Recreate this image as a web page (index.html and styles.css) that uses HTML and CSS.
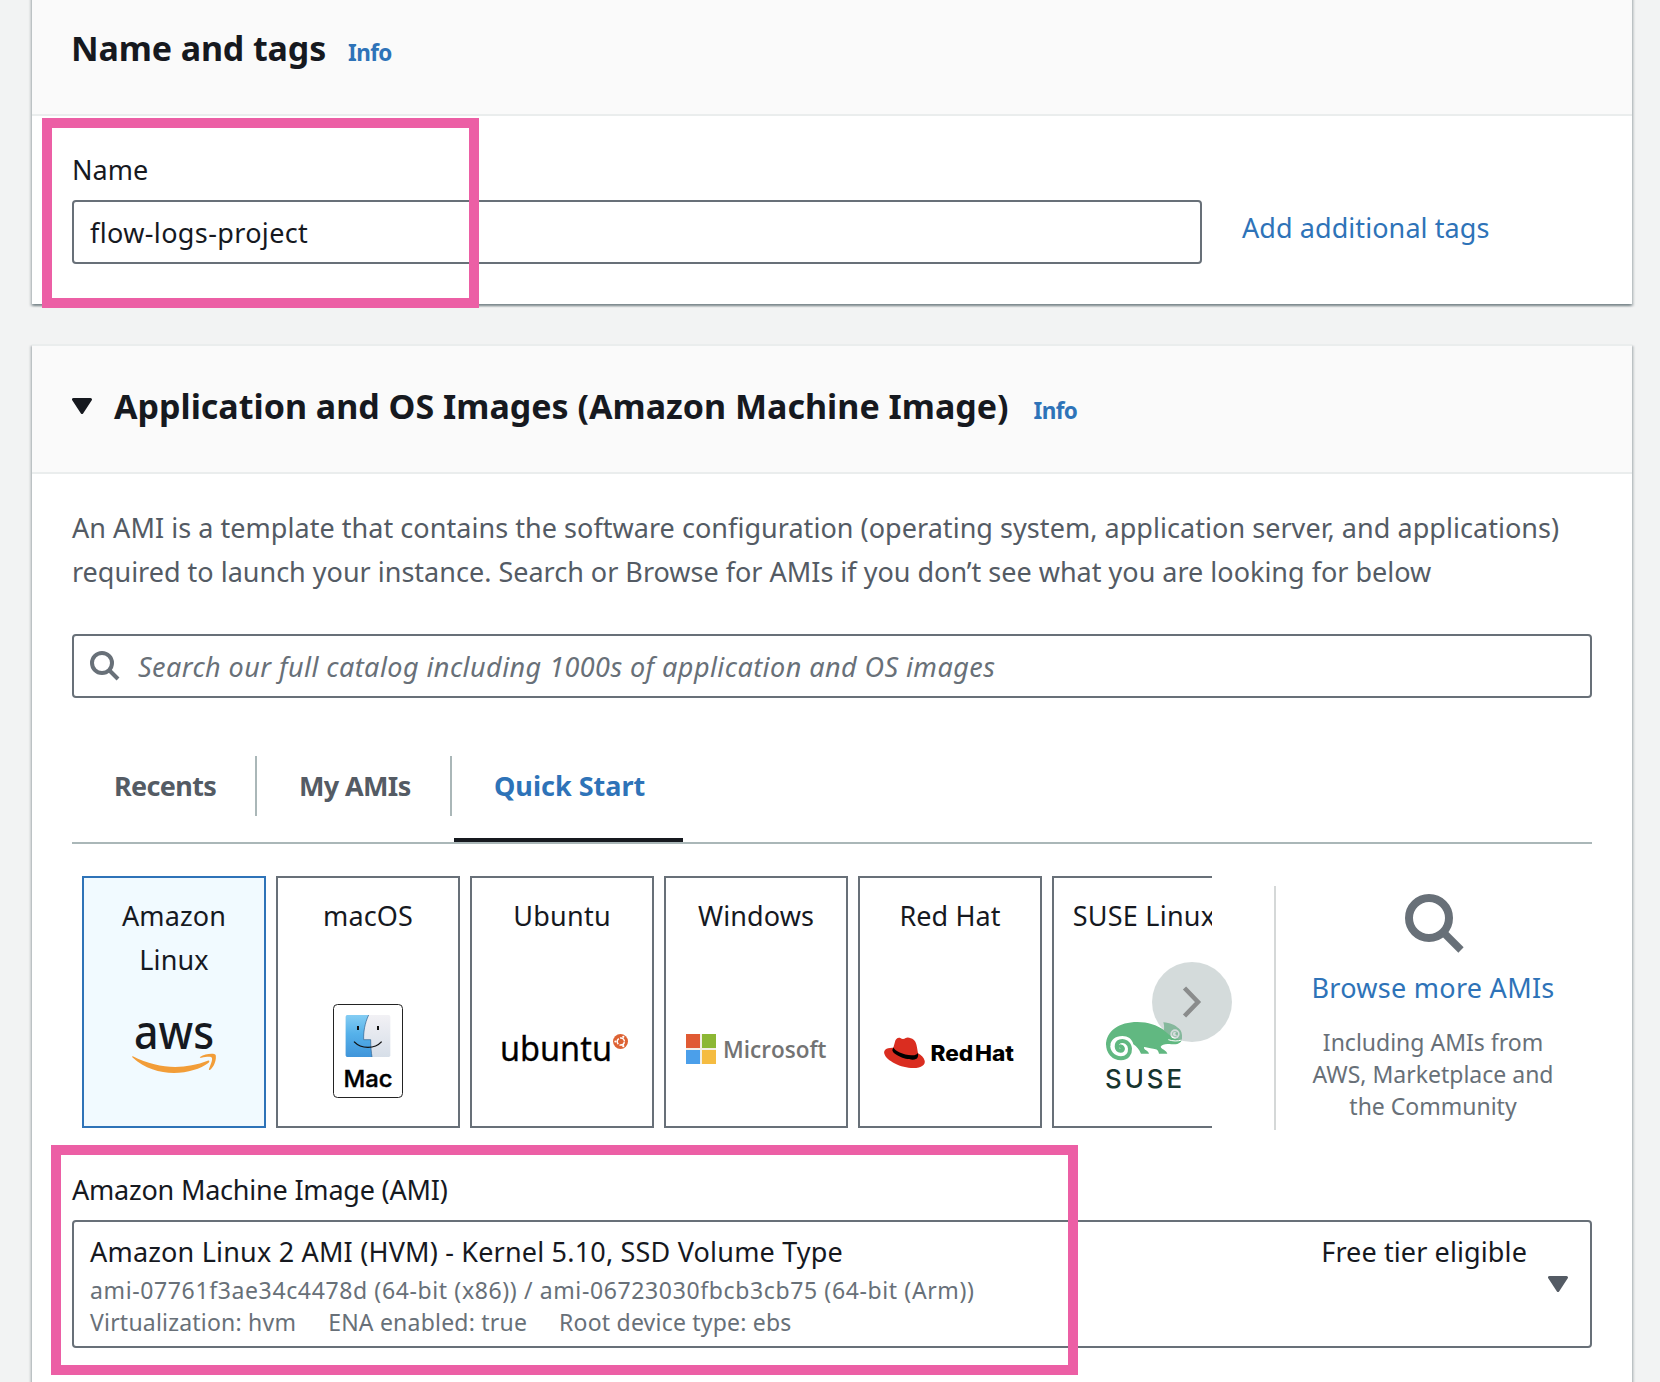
FILE: index.html
```html
<!DOCTYPE html>
<html lang="en">
<head>
<meta charset="utf-8">
<title>Launch an instance</title>
<link rel="stylesheet" href="styles.css">
</head>
<body>
<main class="page">
  <section class="panel">
    <header class="panel-header">
      <h2 class="title title-name">Name and tags</h2>
      <a class="info">Info</a>
    </header>
    <div class="panel-body">
      <label class="field-label">Name</label>
      <div class="name-row">
        <div class="input name-input">flow-logs-project</div>
        <a class="link add-tags">Add additional tags</a>
      </div>
    </div>
  </section>

  <section class="panel panel-ami">
    <header class="panel-header">
      <svg class="caret" width="20" height="16" viewBox="0 0 20 16"><path d="M1.5 1.5h17L10 14.5z" fill="#16191f" stroke="#16191f" stroke-width="3" stroke-linejoin="round"/></svg>
      <h2 class="title">Application and OS Images (Amazon Machine Image)</h2>
      <a class="info info-ami">Info</a>
    </header>
    <div class="panel-body">
      <p class="description"><span class="line-wide">An AMI is a template that contains the software configuration (operating system, application server, and applications)</span><br>required to launch your instance. Search or Browse for AMIs if you don’t see what you are looking for below</p>
      <div class="input search">
        <svg class="search-icon" width="30" height="30" viewBox="0 0 30 30" fill="none" stroke="#687078" stroke-width="4"><circle cx="12" cy="12" r="10"/><path d="M19 19l9 9"/></svg>
        <span class="placeholder">Search our full catalog including 1000s of application and OS images</span>
      </div>

      <nav class="tabs">
        <a class="tab">Recents</a>
        <a class="tab">My AMIs</a>
        <a class="tab active">Quick Start</a>
      </nav>

      <div class="quick-start">
        <div class="carousel-wrap">
          <div class="carousel">
            <div class="card selected">
              <div class="card-title">Amazon<br>Linux</div>
              <svg class="logo" viewBox="84 982 180 144">
                <text x="134" y="1048.500" class="logo-aws" textLength="80" lengthAdjust="spacingAndGlyphs">aws</text>
                <g transform="translate(60 740) scale(.33333)" fill="#f29d38">
                  <path d="M217 948C300 990 375 988 443 962C450 960 449 966 445 969C400 1003 290 1020 217 952z"/>
                  <path d="M420 951C436 940 464 939 467 945C470 958 463 980 450 990C446 991 446 988 448 984C459 958 457 954 454 952C449 949 437 951 424 953C420 954 419 952 420 951z"/>
                </g>
              </svg>
            </div>
            <div class="card">
              <div class="card-title">macOS</div>
              <svg class="logo" viewBox="278 982 180 144">
                <defs>
                  <linearGradient id="face-l" x1="0" y1="0" x2="0" y2="1"><stop offset="0" stop-color="#84cdf3"/><stop offset=".45" stop-color="#55b1ea"/><stop offset="1" stop-color="#4095da"/></linearGradient>
                  <linearGradient id="face-r" x1="0" y1="0" x2="0" y2="1"><stop offset="0" stop-color="#f2f1f5"/><stop offset="1" stop-color="#d6dee8"/></linearGradient>
                </defs>
                <rect x="333.5" y="1004.5" width="69" height="93" rx="4" fill="#fff" stroke="#232323"/>
                <g transform="translate(60 740) scale(.33333)">
                  <rect x="857" y="825" width="134" height="126" rx="5" fill="url(#face-r)"/>
                  <path d="M862 825H926C914 850 910 878 911 899H932C932 920 934 938 936 951H862Q857 951 857 946V830Q857 825 862 825z" fill="url(#face-l)"/>
                  <path d="M926 825C914 850 910 878 911 899H932C932 920 934 938 936 951" fill="none" stroke="#2d5f8c" stroke-width="2"/>
                  <path d="M894 858v12M954 858v12" stroke="#111" stroke-width="6"/>
                  <path d="M882 905C904 928 944 928 965 905" fill="none" stroke="#111" stroke-width="4"/>
                </g>
                <text x="343.500" y="1086.500" class="logo-mac" textLength="49" lengthAdjust="spacingAndGlyphs">Mac</text>
              </svg>
            </div>
            <div class="card">
              <div class="card-title wide">Ubuntu</div>
              <svg class="logo" viewBox="472 982 180 144">
                <text x="500" y="1061" class="logo-ubuntu" textLength="112" lengthAdjust="spacingAndGlyphs">ubuntu</text>
                <circle cx="620.5" cy="1041.5" r="7.5" fill="#dd6233"/>
                <circle cx="620.8" cy="1041.5" r="3.6" fill="none" stroke="#fff" stroke-width="1.5" stroke-dasharray="6.3 1.24" stroke-dashoffset="-.6"/>
                <g fill="#fff"><circle cx="615.4" cy="1041.5" r="1.1"/><circle cx="623.3" cy="1036.8" r="1.1"/><circle cx="623.3" cy="1046.2" r="1.1"/></g>
              </svg>
            </div>
            <div class="card">
              <div class="card-title">Windows</div>
              <svg class="logo" viewBox="666 982 180 144">
                <path fill="#f3efe6" d="M686 1034h30v30h-30z"/>
                <path fill="#e05a33" d="M686 1034h14v14h-14z"/><path fill="#8cb734" d="M702 1034h14v14h-14z"/>
                <path fill="#4b9fea" d="M686 1050h14v14h-14z"/><path fill="#f5bc41" d="M702 1050h14v14h-14z"/>
                <text x="723" y="1057.5" class="logo-ms" textLength="103.500" lengthAdjust="spacingAndGlyphs">Microsoft</text>
              </svg>
            </div>
            <div class="card">
              <div class="card-title">Red Hat</div>
              <svg class="logo" viewBox="860 982 180 144">
                <g transform="translate(850 860) scale(.33333)">
                  <path fill="#da2d20" d="M130 563C108 562 100 571 103 581C109 602 153 624 190 624C215 624 227 613 224 602C222 593 214 585 204 580C201 560 199 545 191 539C184 534 173 530 167 534C162 538 156 538 151 534C144 531 136 537 135 545z"/>
                  <path fill="#000" d="M130 562C133 572 160 586 185 586C198 586 203 581 204 578C205 588 205 599 188 599C162 599 127 582 127 570z"/>
                </g>
                <text x="930.500" y="1060.500" class="logo-redhat" textLength="83.500" lengthAdjust="spacingAndGlyphs">Red Hat</text>
              </svg>
            </div>
            <div class="card">
              <div class="card-title wide">SUSE Linux</div>
              <svg class="logo" viewBox="1054 982 180 144">
                <g transform="translate(850 860) scale(.33333)">
                  <path fill="#61b881" d="M768 556C768 512 808 486 862 486C895 486 920 495 942 510C943 500 942 494 940 487C960 488 976 496 986 505C994 511 997 522 996 534C996 548 985 556 958 552C946 551 936 553 932 560C934 568 950 570 952 581H927C925 571 921 567 910 566C898 565 889 562 882 561C880 570 896 572 897 581H873C868 568 860 560 850 553C846 536 834 528 817 528C796 528 781 540 781 558z"/>
                  <path d="M774.500 552C773 576 790 594.500 813 594.500C832 594.500 841 580 840 566C838 547 822 540 810 544C796 549 797 571 812 572.500C822 572 820 561 812 559" fill="none" stroke="#61b881" stroke-width="12" stroke-linecap="round"/>
                  <circle cx="975" cy="522" r="14" fill="#fff"/><circle cx="975" cy="522" r="8" fill="#fff" stroke="#61b881" stroke-width="2"/><circle cx="980" cy="521" r="4" fill="#61b881"/>
                  <path d="M955 539C968 544 984 544 995 540" fill="none" stroke="#fff" stroke-width="3"/>
                </g>
                <text x="1105" y="1088" class="logo-suse" textLength="80" lengthAdjust="spacingAndGlyphs">SUSE</text>
              </svg>
            </div>
          </div>
          <div class="next"><svg width="80" height="80" viewBox="0 0 80 80"><path d="M32.500 26L46 40L32.500 54" fill="none" stroke="#8a8c8c" stroke-width="4.500"/></svg></div>
        </div>
        <div class="browse">
          <svg class="browse-icon" width="60" height="60" viewBox="0 0 60 60" fill="none" stroke="#687078" stroke-width="8"><circle cx="24" cy="24" r="20"/><path d="M38 38L56 56" stroke-width="7.500"/></svg>
          <a class="link browse-link">Browse more AMIs</a>
          <p class="browse-note">Including AMIs from<br>AWS, Marketplace and<br>the Community</p>
        </div>
      </div>

      <label class="field-label ami-label">Amazon Machine Image (AMI)</label>
      <div class="input select">
        <div class="select-main">
          <div class="ami-name">Amazon Linux 2 AMI (HVM) - Kernel 5.10, SSD Volume Type</div>
          <div class="ami-meta ami-ids">ami-07761f3ae34c4478d (64-bit (x86)) / ami-06723030fbcb3cb75 (64-bit (Arm))</div>
          <div class="ami-meta ami-tags"><span>Virtualization: hvm</span><span>ENA enabled: true</span><span>Root device type: ebs</span></div>
        </div>
        <div class="free-tier">Free tier eligible</div>
        <svg width="20" height="16" viewBox="0 0 20 16"><path d="M1.5 1.5h17L10 14.5z" fill="#545b64" stroke="#545b64" stroke-width="3" stroke-linejoin="round"/></svg>
      </div>
    </div>
  </section>
</main>
<div class="highlight highlight-name"></div>
<div class="highlight highlight-ami"></div>
</body>
</html>
```
FILE: styles.css
```css
* {
  box-sizing: border-box;
}

body {
  position: relative;
  margin: 0;
  height: 1382px;
  overflow: hidden;
  background: #f2f3f3;
  color: #16191f;
  font: 27px/44px "Noto Sans", "Open Sans", sans-serif;
}

/* The page is scrolled slightly past the top of the first panel. */
.page {
  display: flex;
  flex-direction: column;
  gap: 40px;
  width: 1600px;
  margin: -14px 0 0 32px;
}

.panel {
  border-top: 2px solid #eaeded;
  background: #fff;
  box-shadow: 0 2px 2px 0 rgba(0, 28, 36, .3), 2px 2px 2px 0 rgba(0, 28, 36, .15), -2px 2px 2px 0 rgba(0, 28, 36, .15);
}

.panel-ami {
  height: 1100px;
}

.panel-header {
  display: flex;
  align-items: baseline;
  height: 128px;
  padding: 38px 40px 0;
  border-bottom: 2px solid #eaeded;
  background: #fafafa;
}

.title {
  margin: 0;
  font-size: 34px;
  font-weight: 700;
}

.title-name {
  margin-left: -1px;
  letter-spacing: -.13px;
}

.info {
  margin-left: 22px;
  color: #2e73b8;
  font-size: 22.5px;
  font-weight: 700;
  letter-spacing: -.6px;
}

.info-ami {
  margin-left: 25px;
}

.caret {
  align-self: flex-start;
  margin: 14px 22px 0 0;
}

.panel-body {
  padding: 32px 40px 40px;
}

.field-label {
  display: block;
  margin-bottom: 8px;
}

.name-row {
  display: flex;
  gap: 40px;
}

.input {
  display: flex;
  align-items: center;
  border: 2px solid #687078;
  border-radius: 4px;
  background: #fff;
}

.name-input {
  width: 1130px;
  height: 64px;
  padding: 2px 16px 0;
  letter-spacing: .37px;
}

.link {
  color: #2e73b8;
}

.add-tags {
  line-height: 56px;
  letter-spacing: .07px;
}

.description {
  margin: 0 0 40px;
  color: #545b64;
  white-space: nowrap;
}

.line-wide {
  letter-spacing: .042px;
}

.search {
  height: 64px;
  padding: 0 16px;
  gap: 18px;
}

.placeholder {
  padding-top: 2px;
  color: #687078;
  font-style: italic;
  letter-spacing: .436px;
}

.tabs {
  display: flex;
  align-items: flex-start;
  height: 88px;
  margin-top: 58px;
  border-bottom: 2px solid #aab7b8;
  color: #545b64;
  font-weight: 700;
  line-height: 60px;
}

.tab {
  width: 185px;
  height: 60px;
  padding-left: 42px;
  border-right: 2px solid #aab7b8;
  letter-spacing: -.65px;
  white-space: nowrap;
}

.tab + .tab {
  width: 195px;
}

.tab.active {
  width: 229px;
  height: 86px;
  margin-left: 2px;
  padding-left: 40px;
  border-right: 0;
  border-bottom: 4px solid #16191f;
  color: #2e73b8;
  letter-spacing: 0;
}

.quick-start {
  display: flex;
  height: 254px;
  margin-top: 32px;
}

.carousel-wrap {
  position: relative;
  width: 1140px;
}

.carousel {
  display: flex;
  gap: 10px;
  height: 252px;
  padding-left: 10px;
  overflow: hidden;
}

.card {
  flex: 0 0 184px;
  padding-top: 16px;
  border: 2px solid #687078;
  background: #fff;
  text-align: center;
  white-space: nowrap;
}

.card.selected {
  border-color: #2e73b8;
  background: #f1faff;
}

.card-title {
  height: 88px;
  letter-spacing: .1px;
}

.card-title.wide {
  letter-spacing: .25px;
}

.logo {
  display: block;
  width: 180px;
  height: 144px;
}

.logo-aws {
  font: 500 47px "Noto Sans", sans-serif;
  fill: #16191f;
}

.logo-mac {
  font: 500 23.5px Inter, sans-serif;
  stroke: #000;
  stroke-width: .4px;
}

.logo-ubuntu {
  font: 400 35px "Noto Sans", sans-serif;
  stroke: #000;
  stroke-width: .3px;
}

.logo-ms {
  font: 600 24px "Open Sans", sans-serif;
  fill: #737373;
}

.logo-redhat {
  font: 800 21px Inter, sans-serif;
  word-spacing: -3px;
}

.logo-suse {
  font: 500 26px Inter, sans-serif;
  letter-spacing: 3px;
  fill: #17352f;
}

.next {
  position: absolute;
  right: -20px;
  top: 86px;
  width: 80px;
  height: 80px;
  border-radius: 50%;
  background: rgba(170, 183, 184, .5);
}

.browse {
  display: flex;
  flex-direction: column;
  align-items: center;
  width: 316px;
  margin: 10px 0 0 62px;
  padding-top: 8px;
  border-left: 2px solid #d5d8d8;
}

.browse-icon {
  margin-left: 4px;
}

.browse-link {
  margin-top: 12px;
  letter-spacing: .28px;
}

.browse-note {
  margin: 16px 0 0;
  color: #687078;
  font-size: 23px;
  line-height: 32px;
  text-align: center;
}

.ami-label {
  margin-top: 38px;
  letter-spacing: -.21px;
}

.select {
  height: 128px;
  padding: 0 22px 0 16px;
}

.select-main {
  flex: 1;
}

.ami-name {
  letter-spacing: .19px;
}

.ami-meta {
  color: #687078;
  font-size: 23px;
  line-height: 32px;
  letter-spacing: .21px;
}

.ami-ids {
  letter-spacing: .627px;
}

.ami-tags {
  display: flex;
  gap: 32px;
}

.free-tier {
  align-self: flex-start;
  margin: 8px 21px 0 0;
  letter-spacing: .11px;
}

/* Marker frames drawn over the form */
.highlight {
  position: absolute;
  border: 10px solid #ec5fa5;
}

.highlight-name {
  left: 42px;
  top: 118px;
  width: 437px;
  height: 190px;
}

.highlight-ami {
  left: 51px;
  top: 1145px;
  width: 1027px;
  height: 230px;
}
```
